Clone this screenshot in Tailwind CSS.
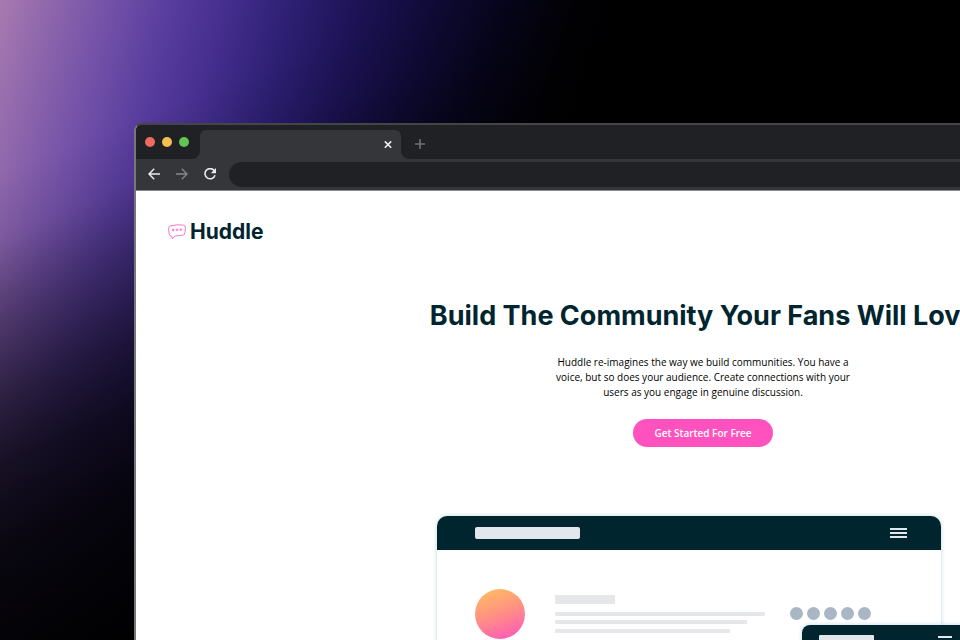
<!DOCTYPE html>
<html lang="en">
<head>
<meta charset="utf-8">
<meta name="viewport" content="width=device-width, initial-scale=1">
<title>Huddle</title>
<script src="https://cdn.jsdelivr.net/npm/@tailwindcss/browser@4"></script>
</head>
<body class="min-h-screen overflow-hidden bg-black font-['Open_Sans',sans-serif]">
<div class="flex h-screen overflow-hidden bg-[linear-gradient(158deg,transparent_160px,rgb(0_0_0/0.08)_220px,rgb(0_0_0/0.32)_285px,rgb(0_0_0/0.6)_365px,rgb(0_0_0/0.78)_430px,rgb(0_0_0/0.9)_510px,black_660px),linear-gradient(105deg,#a97ab0_0px,#9068ac_45px,#7452a8_105px,#583d9e_165px,#452e8e_220px,#2c1f72_285px,#1c1254_350px,#0f0a36_420px,#06041a_490px,#010104_560px,black_630px)] pt-[123px] pl-[134px]">
  <div class="flex w-[1136px] shrink-0 flex-col overflow-hidden rounded-tl-lg border-t-2 border-l-2 border-t-[#454548] border-l-[#77767c] bg-[#202124]">
    <div class="flex h-[34px] shrink-0 items-end bg-linear-to-b from-[#202124] from-50% to-[#35363a] to-50%">
      <div class="flex h-full w-16 items-center gap-[7px] rounded-br-lg bg-[#202124] pl-[9px]">
        <span class="size-[10px] rounded-full bg-[#ed6a5e]"></span>
        <span class="size-[10px] rounded-full bg-[#f5bf4f]"></span>
        <span class="size-[10px] rounded-full bg-[#61c554]"></span>
      </div>
      <div class="flex h-[29px] w-[201px] items-center justify-end rounded-t-md bg-[#35363a] pr-2">
        <button type="button" aria-label="Close tab" class="size-[10px]">
          <svg viewBox="0 0 10 10" class="size-[10px]" fill="none" stroke="#f1f3f4" stroke-width="1.5"><path d="M1.8 1.4l6.4 6.4M8.2 1.4L1.8 7.8"/></svg>
        </button>
      </div>
      <div class="flex h-full flex-1 items-end rounded-bl-lg bg-[#202124]">
        <button type="button" aria-label="New tab" class="ml-[13px] flex h-[30px] w-3 items-center">
          <svg viewBox="0 0 12 12" class="size-3" fill="none" stroke="#717276" stroke-width="1.5"><path d="M6 1v10M1 6h10"/></svg>
        </button>
      </div>
    </div>
    <div class="flex h-8 shrink-0 items-center border-b border-[#8a898c] bg-[#35363a] pl-3">
      <div class="flex gap-4 pb-px">
        <button type="button" aria-label="Back" class="size-3"><svg viewBox="0 0 12 12" class="size-3" fill="none" stroke="#e8eaed" stroke-width="1.5"><path d="M12 6H1.2M6.2 .8L1 6l5.2 5.2"/></svg></button>
        <button type="button" aria-label="Forward" class="size-3"><svg viewBox="0 0 12 12" class="size-3" fill="none" stroke="#85868a" stroke-width="1.3"><path d="M0 6h10.8M5.8 .8L11 6l-5.2 5.2"/></svg></button>
        <button type="button" aria-label="Reload" class="size-3"><svg viewBox="0 0 12 12" class="size-3" fill="none" stroke="#e8eaed" stroke-width="1.6"><path d="M10.2 2.6A5.1 5.1 0 1 0 11 7.2"/><path d="M12 0v5.2H6.8z" fill="#e8eaed" stroke="none"/></svg></button>
      </div>
      <input type="text" aria-label="Address" class="mx-[13px] h-[25px] min-w-0 flex-1 rounded-full bg-[#202124] px-4 text-xs text-white">
    </div>
    <main class="flex-1 bg-white">
      <header class="px-8 pt-[26px]">
        <a href="#" class="flex items-center gap-1 font-['Inter',sans-serif] text-[21px] leading-[30px] font-bold text-[#00252e]">
          <svg viewBox="0 0 18 16" class="h-4 w-[18px]" fill="none" stroke="#f16dc0" stroke-width=".9" stroke-linejoin="round"><path d="M3 1.7Q9 .2 15.4 1.1Q17.6 1.4 17.4 4.1L16.9 8.8Q16.7 11 14.7 11.2Q10.4 11.5 6.8 12.1L4.2 15L3.9 12.3Q1.6 12.3 1.2 10.2L.6 4.6Q.4 2.3 3 1.7Z"/><g stroke="#ff52bf" stroke-width=".9"><circle cx="5.2" cy="6" r=".8"/><circle cx="9" cy="5.8" r=".8"/><circle cx="12.8" cy="5.6" r=".8"/></g></svg>
          <span>Huddle</span>
        </a>
      </header>
      <section class="flex flex-col items-center pt-[49px] text-center">
        <h1 class="font-['Inter',sans-serif] text-[27px] leading-10 font-bold whitespace-nowrap text-[#00252e]">Build The Community Your Fans Will Love</h1>
        <p class="mt-[19px] w-[310px] text-[10px] leading-[15px] text-black">Huddle re-imagines the way we build communities. You have a voice, but so does your audience. Create connections with your users as you engage in genuine discussion.</p>
        <button type="button" class="mt-[19px] h-7 rounded-full bg-[#ff52bf] px-[21px] text-[10px] font-semibold text-white">Get Started For Free</button>
        <div class="relative mt-[69px] w-[532px]">
          <div class="h-[340px] w-[504px] overflow-hidden rounded-[10px] bg-white shadow-[0_0_4px_#bcd8dc]">
            <div class="flex h-[34px] items-center justify-between bg-[#00252e] pr-[34px] pl-[38px]">
              <span class="h-3 w-[105px] rounded-xs bg-[#e1e7ec]"></span>
              <span class="flex w-[17px] flex-col gap-[2px]"><i class="h-[2px] bg-[#e1e7ec]"></i><i class="h-[2px] bg-[#e1e7ec]"></i><i class="h-[2px] bg-[#e1e7ec]"></i></span>
            </div>
            <div class="flex px-[38px] pt-[39px]">
              <span class="size-[50px] shrink-0 rounded-full bg-linear-[160deg,#ffc35f_0%,#ff9480_45%,#ff52bf_100%]"></span>
              <div class="ml-[30px] flex w-[210px] flex-col pt-[6px]">
                <span class="h-[9px] w-[60px] bg-[#e5e7eb]"></span>
                <span class="mt-2 h-1 bg-[#e5e7eb]"></span>
                <span class="mt-1 h-1 w-[192px] bg-[#e5e7eb]"></span>
                <span class="mt-[5px] h-1 w-[175px] bg-[#e5e7eb]"></span>
              </div>
              <div class="ml-[25px] flex gap-1 pt-[18px]">
                <span class="size-[13px] rounded-full bg-[#a9b7c4]"></span>
                <span class="size-[13px] rounded-full bg-[#a9b7c4]"></span>
                <span class="size-[13px] rounded-full bg-[#a9b7c4]"></span>
                <span class="size-[13px] rounded-full bg-[#a9b7c4]"></span>
                <span class="size-[13px] rounded-full bg-[#a9b7c4]"></span>
              </div>
            </div>
          </div>
          <div class="absolute top-[109px] right-0 h-[260px] w-[167px] overflow-hidden rounded-lg bg-white shadow-[0_0_4px_#bcd8dc]">
            <div class="flex h-7 items-start justify-between bg-[#00252e] px-[17px] pt-[10px]">
              <span class="h-2 w-[55px] rounded-[1px] bg-[#e1e7ec]"></span>
              <span class="flex w-[14px] flex-col gap-[2px] pt-px"><i class="h-[2px] bg-[#e1e7ec]"></i><i class="h-[2px] bg-[#e1e7ec]"></i><i class="h-[2px] bg-[#e1e7ec]"></i></span>
            </div>
          </div>
        </div>
      </section>
    </main>
  </div>
</div>
</body>
</html>
